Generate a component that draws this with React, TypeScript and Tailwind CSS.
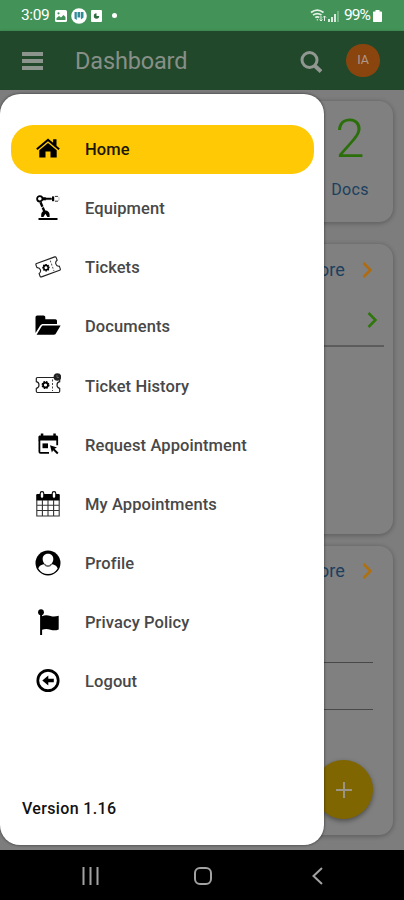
import type { ReactNode } from 'react';

function Icon({ children }: { children: ReactNode }) {
    return (
        <svg viewBox="0 0 26 26" className="h-[26px] w-[26px] shrink-0 text-black" fill="currentColor">
            {children}
        </svg>
    );
}

const Gear = ({ cx, cy }: { cx: number; cy: number }) => (
    <>
        <circle cx={cx} cy={cy} r="3.3" fill="none" stroke="currentColor" strokeWidth="1.4" strokeDasharray="1.6 1" />
        <circle cx={cx} cy={cy} r="2.4" fill="none" stroke="currentColor" strokeWidth="1.6" />
    </>
);

const TicketShape = () => (
    <>
        <path
            d="M2.5 5.5h21c.8 0 1.2.4 1.2 1.2v3c-3.6.8-3.6 5.8 0 6.600v3c0 .8-.4 1.200-1.200 1.200h-21c-.8 0-1.200-.4-1.200-1.200v-3c3.600-.8 3.600-5.800 0-6.600v-3c0-.8.4-1.200 1.200-1.200z"
            fill="none"
            stroke="#222"
            strokeWidth="1.2"
            strokeLinejoin="round"
        />
        <path d="M17.5 7.5v11.500" stroke="#444" strokeWidth="1" strokeDasharray="2 1.5" />
        <Gear cx={10.5} cy={13} />
    </>
);

const items = [
    {
        label: 'Home',
        icon: (
            <Icon>
                <path d="M13 2.6 1.2 12.5l1.3 1.5L13 5.3 23.5 14l1.3-1.5-3.3-2.8V3.2h-3.4v3.6z" />
                <path d="M13 7 4.3 14.2v7.4h6.2v-6.2h5v6.2h6.2v-7.4z" />
            </Icon>
        ),
    },
    {
        label: 'Equipment',
        icon: (
            <Icon>
                <circle cx="4.8" cy="3.8" r="2.7" fill="none" stroke="currentColor" strokeWidth="1.8" />
                <path d="M8 2.5h2.500l1 .5h5v1.600h-5l-1 .5H8z" stroke="currentColor" strokeWidth=".5" />
                <path d="M17 1.400h2.200v4.800H17z" />
                <path d="M20 1.400h3M20 6.200h3" stroke="#333" strokeWidth="1" />
                <path d="M23.200 1.600c1.200 1 1.200 3.500 0 4.500" fill="none" stroke="#aaa" strokeWidth=".8" />
                <path d="M5.5 7.2l4.2 10" stroke="currentColor" strokeWidth="2.4" strokeDasharray="5 .8" />
                <path d="M6.2 22v-2.2a4.2 4.2 0 0 1 8.4 0V22h-2.2l-2-3.3-2 3.3z" />
                <path d="M3.5 23h19v2h-19z" />
            </Icon>
        ),
    },
    {
        label: 'Tickets',
        icon: (
            <Icon>
                <g transform="rotate(-20 13 13) translate(1.2 .6) scale(.92 .95)">
                    <TicketShape />
                </g>
            </Icon>
        ),
    },
    {
        label: 'Documents',
        icon: (
            <Icon>
                <path d="M.5 20V4.6C.5 3.4 1.2 2.6 2.3 2.6h6.2c1 0 1.8.8 1.8 1.8v1.9h10c1 0 1.700.7 1.700 1.700v3H8.3c-1.5 0-2.4.5-3.2 1.700z" />
                <path d="M8.4 12.6h17.2l-4.7 8c-.5.8-1 1.2-2 1.2H1.6l4.8-8c.5-.8 1-1.2 2-1.2z" />
            </Icon>
        ),
    },
    {
        label: 'Ticket History',
        icon: (
            <Icon>
                <TicketShape />
                <circle cx="22.4" cy="5" r="3.8" fill="#222" />
                <path d="M22 3v2.5h2" fill="none" stroke="#777" strokeWidth=".7" />
            </Icon>
        ),
    },
    {
        label: 'Request Appointment',
        icon: (
            <Icon>
                <path d="M5.8 2.4h2.5v2h10V2.4h2.5v2h.7c1 0 1.6.7 1.6 1.6v3.5H3.4V6c0-1 .6-1.6 1.6-1.6h.8z" />
                <path d="M4.4 9v11.8c0 .7.4 1 1 1H14M22.2 9v5.2" fill="none" stroke="currentColor" strokeWidth="1.8" />
                <path d="M7.5 12.400h5.5v4.800H7.500z" />
                <path d="M15 14.2l7 2.3-2.5 1.3 4 4-1.4 1.4-4-4-1.2 2.4z" />
            </Icon>
        ),
    },
    {
        label: 'My Appointments',
        icon: (
            <Icon>
                <path d="M1.2 4.2c0-.8.5-1.2 1.2-1.2h21.2c.7 0 1.2.4 1.2 1.2v5.3H1.2z" />
                <path
                    d="M1.8 9v16h22.4V9M1.8 14.2h22.4M1.8 19.5h22.4M7.4 9v16M13 9v16M18.6 9v16"
                    fill="none"
                    stroke="#333"
                    strokeWidth="1.1"
                />
                <rect x="5.2" y=".6" width="3.6" height="6.6" rx="1.8" fill="#fff" stroke="currentColor" strokeWidth="1.1" />
                <rect x="17.2" y=".6" width="3.6" height="6.6" rx="1.8" fill="#fff" stroke="currentColor" strokeWidth="1.1" />
            </Icon>
        ),
    },
    {
        label: 'Profile',
        icon: (
            <Icon>
                <circle cx="13" cy="13" r="12.5" />
                <path d="M3.3 18.6c.8-3 3-3.7 5.8-4.6 2 2.3 5.8 2.3 7.8 0 2.8.9 5 1.6 5.8 4.6a11.3 11.3 0 0 1-19.4 0z" fill="#fff" />
                <path d="M13 3.8c3.6 0 5.6 2.4 5.3 5.8-.3 3.4-2.5 5.8-5.3 5.8s-5-2.4-5.3-5.8C7.4 6.2 9.4 3.8 13 3.8z" fill="#fff" />
                <path d="M9 14.3c2 2.7 6 2.7 8 0" fill="none" stroke="currentColor" strokeWidth=".7" />
            </Icon>
        ),
    },
    {
        label: 'Privacy Policy',
        icon: (
            <Icon>
                <circle cx="6" cy="3.2" r="2.9" />
                <path d="M5.1 4h2v22h-2z" />
                <path d="M7 7.2c3-1.2 5.5-1 8.500-.1 3 .8 5 .6 8.200-.3v13.600c-3 1.100-5.300 1.100-8.200.3-3-.8-5.500-1-8.500.1z" />
            </Icon>
        ),
    },
    {
        label: 'Logout',
        icon: (
            <Icon>
                <circle cx="13" cy="12.5" r="10.2" fill="none" stroke="currentColor" strokeWidth="2.7" />
                <path d="M7.3 12.5l6-5v3.3h5.500v3.4h-5.500v3.300z" />
            </Icon>
        ),
    },
];

function Chevron({ className }: { className: string }) {
    return (
        <svg viewBox="0 0 10 16" className={`h-4 w-2.5 ${className}`} fill="none" stroke="currentColor" strokeWidth="2.6">
            <path d="M1.5 1 8.500 8l-7 7" />
        </svg>
    );
}

function StatusBar() {
    return (
        <div className="flex h-[31px] shrink-0 items-center bg-[#439358] pl-[21px] pr-[22px] text-white">
            <span className="w-[34px] pt-px text-[15.5px] tracking-[-0.4px]">3:09</span>
            <svg viewBox="0 0 12 12" className="h-3 w-3">
                <rect width="12" height="12" rx="1.5" fill="#fff" />
                <path d="M1.500 10V8l2.500-2 2 1.500L8.500 5l2 2v3z" fill="#439358" />
                <circle cx="3.5" cy="3.3" r="1.1" fill="#439358" />
            </svg>
            <svg viewBox="0 0 16 16" className="ml-1 h-4 w-4">
                <circle cx="8" cy="8" r="7.8" fill="#fff" />
                <path d="M3.5 4h2.3v8l-2.300-1.500zM6.500 4h2.700v5.500H6.500zM9.900 4h2.600v5.500l-2.600 2z" fill="#318c98" />
            </svg>
            <svg viewBox="0 0 11 12" className="ml-1 h-3 w-[11px]">
                <rect width="11" height="12" rx="1" fill="#fff" />
                <path d="M5.5 3.3A2.7 2.7 0 1 0 8.2 6H5.5z" fill="#2d6c40" />
            </svg>
            <span className="ml-[10px] h-[5px] w-[5px] rounded-full bg-white" />
            <span className="grow" />
            <svg viewBox="0 0 17 13" className="h-[13px] w-[17px]" fill="none" stroke="#e4f1e7">
                <path d="M1 3.5c4-3 8.500-3 12.500 0M3 6c3-2 5.500-2 8.500 0M5.300 8.500c1.500-1 2.500-1 4 0" strokeWidth="1.700" />
                <path d="M7.3 10v1.500M11 7v5M9.500 10.500 11 12l1.500-1.500M14.500 12V7M13 8.500 14.500 7 16 8.500" strokeWidth="1" />
            </svg>
            <svg viewBox="0 0 11 12" className="ml-px h-3 w-[11px]" fill="#d9ebdd">
                <path d="M0 9h2v3H0zM3 7h2v5H3zM6 4h2v8H6z" />
                <path d="M9 1h2v11H9z" opacity=".35" />
            </svg>
            <span className="ml-[5px] w-[28px] pt-px text-[15.5px] tracking-[-0.9px]">99%</span>
            <svg viewBox="0 0 9 12" className="ml-px h-3 w-[9px]" fill="#fff">
                <path d="M2.5 0h4v1.500H8c.6 0 1 .4 1 1V11c0 .6-.4 1-1 1H1c-.6 0-1-.4-1-1V2.500c0-.6.4-1 1-1h1.500z" />
            </svg>
        </div>
    );
}

function Header() {
    return (
        <header className="flex h-[59px] shrink-0 items-center bg-[#22482b] pl-[22px] pr-6 shadow-[0_1px_3px_rgba(0,0,0,0.4)]">
            <div className="flex w-[21px] flex-col gap-[3px] pt-px">
                <span className="h-[4px] bg-[#8c958d]" />
                <span className="h-[4px] bg-[#8c958d]" />
                <span className="h-[4px] bg-[#8c958d]" />
            </div>
            <h1 className="ml-[32px] grow pt-[3px] text-[23.5px] tracking-[-0.15px] text-[#879088]">Dashboard</h1>
            <svg viewBox="0 0 22 22" className="mr-[24px] mt-[2px] h-[22px] w-[22px]" fill="none" stroke="#919891">
                <circle cx="9.5" cy="9" r="7.5" strokeWidth="3" />
                <path d="m14.5 14.5 6.500 6" strokeWidth="4" />
            </svg>
            <div className="flex h-[33px] w-[34px] items-center justify-center rounded-full bg-[#8a450f] text-[12.5px] text-[#b09a8b]">IA</div>
        </header>
    );
}

const card = 'rounded-[14px] bg-[#808080] shadow-[0_1px_4px_1px_rgba(0,0,0,0.22)]';

function Content() {
    return (
        <main className="flex grow flex-col bg-[#7d7d7d] pl-3 pr-[11px] pt-[11px]">
            <section className={`${card} flex h-[121px] flex-col items-end`}>
                <div className="mr-[15px] flex w-[56px] flex-col items-center">
                    <span className="mt-[7px] text-[53px] font-light leading-[62px] text-[#2b6f0b]">2</span>
                    <span className="mt-[9px] text-[16px] leading-[22px] tracking-[0.3px] text-[#1c3f5e]">Docs</span>
                </div>
            </section>

            <section className={`${card} mt-[22px] h-[290px]`}>
                <div className="flex h-[51px] items-center justify-end pr-[21px]">
                    <span className="mr-[17px] text-[18px] tracking-[0.1px] text-[#1c3f5e]">View More</span>
                    <Chevron className="text-[#af6b10]" />
                </div>
                <div className="mr-[9px] flex h-[52px] items-center justify-end border-b-2 border-[#5c5c5c] pr-[7px]">
                    <Chevron className="text-[#2f760d]" />
                </div>
            </section>

            <section className={`${card} mt-3 h-[289px]`}>
                <div className="flex h-[49px] items-center justify-end pr-[21px]">
                    <span className="mr-[17px] text-[18px] tracking-[0.1px] text-[#1c3f5e]">View More</span>
                    <Chevron className="text-[#af7010]" />
                </div>
                <div className="mr-5 h-[68px] border-b border-[#484848]" />
                <div className="mr-5 h-[47px] border-b border-[#484848]" />
                <div className="mr-5 mt-[50px] flex justify-end">
                    <button className="flex h-[59px] w-[59px] items-center justify-center rounded-full bg-[#806600] shadow-[0_2px_5px_rgba(0,0,0,0.4)]">
                        <svg viewBox="0 0 16 16" className="h-4 w-4" stroke="#999484" strokeWidth="2">
                            <path d="M8 0v16M0 8h16" />
                        </svg>
                    </button>
                </div>
            </section>
        </main>
    );
}

function Drawer() {
    return (
        <nav className="absolute left-0 top-[94px] flex h-[751px] w-[324px] flex-col rounded-[20px] bg-white pt-[30.5px] shadow-[0_0_3px_rgba(0,0,0,0.6)]">
            <ul className="flex flex-col gap-[10.1px] pl-[11px] pr-[10px]">
                {items.map(({ label, icon }, i) => (
                    <li
                        key={label}
                        className={`flex h-[49px] items-center rounded-[22px] pl-[24px] text-[16.5px] font-medium tracking-[0.09px] ${
                            i === 0 ? 'bg-[#ffc905] text-[#1c1800]' : 'text-[#484848]'
                        }`}
                    >
                        {icon}
                        <span className="ml-6 pt-[3px]">{label}</span>
                    </li>
                ))}
            </ul>
            <p className="mt-auto pb-[24px] pl-[22px] text-[16px] font-medium tracking-[0.35px] text-[#111]">Version 1.16</p>
        </nav>
    );
}

function NavBar() {
    return (
        <footer className="flex h-[50px] shrink-0 items-center bg-black pl-[82px] pr-[81px] pt-px">
            <svg viewBox="0 0 17 18" className="h-[18px] w-[17px]" stroke="#a2a2a2" strokeWidth="2">
                <path d="M1.500 0v18M8.500 0v18M15.500 0v18" />
            </svg>
            <svg viewBox="0 0 18 18" className="ml-[95px] h-[18px] w-[18px]" fill="none" stroke="#a2a2a2" strokeWidth="2">
                <rect x="1" y="1" width="16" height="16" rx="5" />
            </svg>
            <svg viewBox="0 0 11 18" className="ml-auto h-[18px] w-[11px]" fill="none" stroke="#a2a2a2" strokeWidth="2">
                <path d="M10 1 1.500 9l8.500 8" />
            </svg>
        </footer>
    );
}

export default function App() {
    return (
        <div className="relative flex h-[900px] w-[404px] flex-col overflow-hidden font-['Roboto',sans-serif]">
            <StatusBar />
            <Header />
            <Content />
            <NavBar />
            <Drawer />
        </div>
    );
}
